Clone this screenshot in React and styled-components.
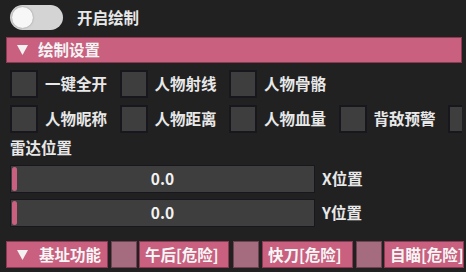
import React from 'react';
import styled, { createGlobalStyle } from 'styled-components';

const pink = '#c9607f';
const pinkMuted = '#a56b7e';
const well = '#3e3e3e';
const edge = '#17171d';

const GlobalStyle = createGlobalStyle`
  html, body {
    margin: 0;
    padding: 0;
    background: #212121;
  }
  body {
    width: 466px;
    height: 272px;
    overflow: hidden;
    font-family: "Noto Sans CJK SC", "Noto Sans", sans-serif;
    color: #e8e8e8;
  }
`;

const Arrow = () => (
  <svg width="11" height="10" viewBox="0 0 11 10">
    <polygon points="0,0 11,0 5.5,10" fill="#f2f2f2" />
  </svg>
);

const Window = styled.div`
  display: flex;
  flex-direction: column;
  padding: 5px 4px 0 6px;
  font-size: 15.5px;
  font-weight: 700;
  line-height: 1;
`;

const ToggleRow = styled.div`
  display: flex;
  align-items: center;
  gap: 14px;
  height: 25px;
  padding-left: 4px;
`;

const Track = styled.div`
  width: 53px;
  height: 25px;
  border-radius: 13px;
  background: #d4d4d4;
  display: flex;
  align-items: center;
  padding-left: 2px;
  box-sizing: border-box;
`;

const Knob = styled.div`
  width: 21px;
  height: 21px;
  border-radius: 50%;
  background: #f7f7f7;
  box-shadow: 0 0 2px rgba(0, 0, 0, 0.35);
`;

const Header = styled.div`
  display: flex;
  align-items: center;
  gap: 10px;
  height: 26px;
  margin-top: 7px;
  padding-left: 11px;
  background: ${pink};
  box-shadow: inset 0 0 0 1px #8a3b53;
  color: #f4f4f4;
`;

const CheckRow = styled.div`
  display: flex;
  gap: 12.5px;
  margin-top: 7px;
  padding-left: 4px;
  white-space: nowrap;
  overflow: hidden;
`;

const CheckItem = styled.div`
  display: flex;
  align-items: center;
  gap: 7px;
  flex-shrink: 0;
`;

const Box = styled.div`
  width: 28px;
  height: 28px;
  box-sizing: border-box;
  background: ${well};
  border: 2px solid ${edge};
  flex-shrink: 0;
`;

const SectionLabel = styled.div`
  margin-top: 4px;
  padding-left: 4px;
  height: 22px;
  display: flex;
  align-items: center;
`;

const SliderRow = styled.div`
  display: flex;
  align-items: center;
  gap: 7px;
  margin-top: ${(p) => p.$top}px;
  padding-left: 4px;
`;

const SliderTrack = styled.div`
  position: relative;
  width: 305px;
  height: 28px;
  box-sizing: border-box;
  background: ${well};
  border: 1px solid ${edge};
  display: flex;
  align-items: center;
  justify-content: center;
  color: #f2f2f2;
`;

const Grab = styled.div`
  position: absolute;
  left: 1px;
  top: 1px;
  bottom: 1px;
  width: 5px;
  border-radius: 3px;
  background: ${pink};
`;

const BottomRow = styled.div`
  display: flex;
  align-items: stretch;
  height: 27px;
  margin-top: 14px;
  white-space: nowrap;
`;

const PinkButton = styled.div`
  display: flex;
  align-items: center;
  gap: ${(p) => (p.$arrow ? 11 : 0)}px;
  width: ${(p) => p.$w}px;
  flex-shrink: 0;
  box-sizing: border-box;
  padding-left: ${(p) => (p.$arrow ? 11 : 6)}px;
  background: ${pink};
  box-shadow: inset 0 0 0 1px #8a3b53;
  color: #f6f6f6;
  margin-left: ${(p) => p.$ml || 0}px;
`;

const MutedBox = styled.div`
  width: 26px;
  flex-shrink: 0;
  background: ${pinkMuted};
  box-shadow: inset 0 0 0 1px #6e4250;
  margin-left: ${(p) => p.$ml}px;
`;

const rowOne = ['一键全开', '人物射线', '人物骨骼'];
const rowTwo = ['人物昵称', '人物距离', '人物血量', '背敌预警', ''];

const Check = ({ label }) => (
  <CheckItem>
    <Box />
    {label && <span>{label}</span>}
  </CheckItem>
);

export default function App() {
  return (
    <>
      <GlobalStyle />
      <Window>
        <ToggleRow>
          <Track>
            <Knob />
          </Track>
          <span>开启绘制</span>
        </ToggleRow>

        <Header>
          <Arrow />
          <span>绘制设置</span>
        </Header>

        <CheckRow>
          {rowOne.map((l) => (
            <Check key={l} label={l} />
          ))}
        </CheckRow>
        <CheckRow>
          {rowTwo.map((l, i) => (
            <Check key={i} label={l} />
          ))}
        </CheckRow>

        <SectionLabel>雷达位置</SectionLabel>
        <SliderRow $top={6}>
          <SliderTrack>
            <Grab />
            0.0
          </SliderTrack>
          <span>X位置</span>
        </SliderRow>
        <SliderRow $top={6}>
          <SliderTrack>
            <Grab />
            0.0
          </SliderTrack>
          <span>Y位置</span>
        </SliderRow>

        <BottomRow>
          <PinkButton $arrow $w={102}>
            <Arrow />
            <span>基址功能</span>
          </PinkButton>
          <MutedBox $ml={3} />
          <PinkButton $w={90} $ml={2}>午后[危险]</PinkButton>
          <MutedBox $ml={4} />
          <PinkButton $w={91} $ml={3}>快刀[危险]</PinkButton>
          <MutedBox $ml={3} />
          <PinkButton $w={80} $ml={2}>自瞄[危险]</PinkButton>
        </BottomRow>
      </Window>
    </>
  );
}
